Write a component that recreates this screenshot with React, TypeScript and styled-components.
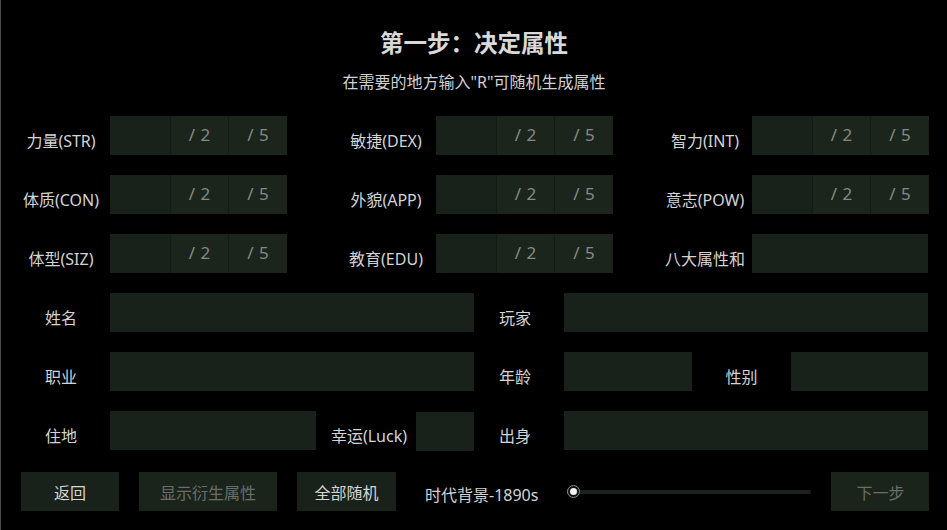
import React from 'react'
import styled, { createGlobalStyle } from 'styled-components'

const GlobalStyle = createGlobalStyle`
  html, body {
    margin: 0;
    padding: 0;
    background: #000;
  }

  body {
    font-family: 'Noto Sans', 'Noto Sans CJK SC', sans-serif;
    color: #d4d4d4;
  }
`

const Page = styled.div`
  box-sizing: border-box;
  width: 947px;
  height: 530px;
  border-left: 1px solid #4c4c4c;
  background: #000;
  overflow: hidden;
`

const Header = styled.header`
  display: flex;
  flex-direction: column;
  align-items: center;
  padding-top: 28px;
`

const Title = styled.h1`
  margin: 0;
  font-size: 23.5px;
  font-weight: 700;
  line-height: 30px;
  color: #d9d9d9;
`

const Subtitle = styled.p`
  margin: 14px 0 0;
  font-size: 16px;
  line-height: 20px;
  color: #d2d2d2;
`

const Form = styled.div`
  display: flex;
  flex-direction: column;
  gap: 20px;
  margin-top: 24px;
  padding-left: 11px;
`

const AttrRow = styled.div`
  display: grid;
  grid-template-columns: 98px 177px 149px 177px 139px 176px;
  height: 39px;
`

const InfoRow = styled.div`
  display: flex;
  height: 39px;
`

const Label = styled.div<{ $width?: number; $padLeft?: number; $padRight?: number }>`
  box-sizing: border-box;
  display: flex;
  align-items: flex-end;
  justify-content: center;
  ${(props) => (props.$width ? `width: ${props.$width}px;` : '')}
  height: 39px;
  padding: 0 ${(props) => props.$padRight ?? 0}px 4px ${(props) => props.$padLeft ?? 0}px;
  font-size: 16px;
  line-height: 20px;
  white-space: nowrap;
  color: #d4d4d4;
`

const Field = styled.div<{ $width: number; $drop?: number }>`
  width: ${(props) => props.$width}px;
  height: 39px;
  margin-top: ${(props) => props.$drop ?? 0}px;
  background: #18211a;
`

const AttrBox = styled.div`
  display: grid;
  grid-template-columns: 60px 58px 59px;
  height: 39px;
  background: #18211a;
`

const Segment = styled.div<{ $value?: boolean }>`
  display: flex;
  align-items: center;
  justify-content: center;
  padding-bottom: 3px;
  background: ${(props) => (props.$value ? '#1b251c' : '#18211a')};
  border-left: ${(props) => (props.$value ? '1px solid #141b15' : 'none')};
  font-size: 17px;
  color: #858a85;
  word-spacing: 1px;
`

const BottomBar = styled.div`
  display: flex;
  align-items: center;
  margin-top: 22px;
  padding-left: 20px;
`

const Button = styled.button<{ $width: number; $disabled?: boolean; $gap?: number }>`
  width: ${(props) => props.$width}px;
  height: 39px;
  margin-right: ${(props) => props.$gap ?? 20}px;
  padding: 0;
  border: none;
  background: ${(props) => (props.$disabled ? '#1a241b' : '#18211a')};
  color: ${(props) => (props.$disabled ? '#6a6e6a' : '#d6d6d6')};
  font-family: 'Noto Sans', 'Noto Sans CJK SC', sans-serif;
  font-size: 16px;
  cursor: pointer;
`

const EraText = styled.span`
  margin: 7px 0 0 29px;
  font-size: 16px;
  line-height: 20px;
  color: #d4d4d4;
  white-space: nowrap;
`

const Slider = styled.div`
  position: relative;
  width: 244px;
  height: 4px;
  margin: 0 20px 0 29px;
  border-radius: 2px;
  background: #1a231b;
`

const SliderFill = styled.div`
  width: 6px;
  height: 4px;
  border-radius: 2px 0 0 2px;
  background: #9aa39a;
`

const Thumb = styled.div`
  position: absolute;
  left: 0;
  top: 50%;
  box-sizing: border-box;
  width: 13px;
  height: 13px;
  margin-top: -6.5px;
  border: 1.5px solid #8c8c8c;
  border-radius: 50%;
  background: #111;
  display: flex;
  align-items: center;
  justify-content: center;

  &::after {
    content: '';
    width: 7px;
    height: 7px;
    border-radius: 50%;
    background: #f2f2f2;
  }
`

const attrs = [
  ['力量(STR)', '敏捷(DEX)', '智力(INT)'],
  ['体质(CON)', '外貌(APP)', '意志(POW)'],
  ['体型(SIZ)', '教育(EDU)'],
]

const offsets = [0, 49, 45]

const Attr: React.FC = () => (
  <AttrBox>
    <Segment />
    <Segment $value>/ 2</Segment>
    <Segment $value>/ 5</Segment>
  </AttrBox>
)

export default function App() {
  return (
    <>
      <GlobalStyle />
      <Page>
        <Header>
          <Title>第一步：决定属性</Title>
          <Subtitle>在需要的地方输入"R"可随机生成属性</Subtitle>
        </Header>

        <Form>
          {attrs.map((row, i) => (
            <AttrRow key={i}>
              {row.map((name, j) => (
                <React.Fragment key={name}>
                  <Label $padLeft={offsets[j]}>{name}</Label>
                  <Attr />
                </React.Fragment>
              ))}
              {row.length === 2 && (
                <>
                  <Label $padLeft={offsets[2]}>八大属性和</Label>
                  <Field $width={176} />
                </>
              )}
            </AttrRow>
          ))}

          <InfoRow>
            <Label $width={98}>姓名</Label>
            <Field $width={364} />
            <Label $width={90} $padRight={8}>玩家</Label>
            <Field $width={364} />
          </InfoRow>

          <InfoRow>
            <Label $width={98}>职业</Label>
            <Field $width={364} />
            <Label $width={90} $padRight={8}>年龄</Label>
            <Field $width={128} />
            <Label $width={99}>性别</Label>
            <Field $width={137} />
          </InfoRow>

          <InfoRow>
            <Label $width={98}>住地</Label>
            <Field $width={206} />
            <Label $width={100} $padLeft={6}>幸运(Luck)</Label>
            <Field $width={58} $drop={1} />
            <Label $width={90} $padRight={8}>出身</Label>
            <Field $width={364} />
          </InfoRow>
        </Form>

        <BottomBar>
          <Button $width={98}>返回</Button>
          <Button $width={138} $disabled>显示衍生属性</Button>
          <Button $width={99} $gap={0}>全部随机</Button>
          <EraText>时代背景-1890s</EraText>
          <Slider>
            <SliderFill />
            <Thumb />
          </Slider>
          <Button $width={98} $disabled $gap={0}>下一步</Button>
        </BottomBar>
      </Page>
    </>
  )
}
